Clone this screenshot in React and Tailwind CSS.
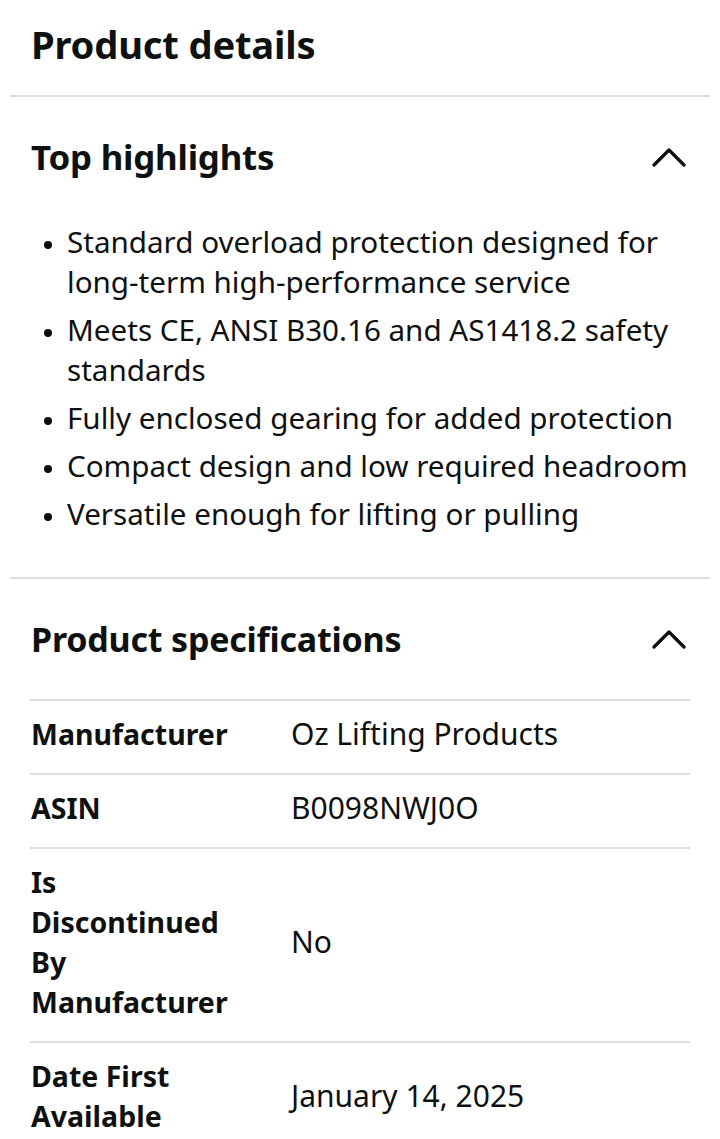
import React from "react";

const highlights = [
  "Standard overload protection designed for long-term high-performance service",
  "Meets CE, ANSI B30.16 and AS1418.2 safety standards",
  "Fully enclosed gearing for added protection",
  "Compact design and low required headroom",
  "Versatile enough for lifting or pulling",
];

const specs = [
  ["Manufacturer", "Oz Lifting Products"],
  ["ASIN", "B0098NWJ0O"],
  ["Is Discontinued By Manufacturer", "No"],
  ["Date First Available", "January 14, 2025"],
];

function Chevron() {
  return (
    <svg width="36" height="20" viewBox="0 0 36 20" fill="none" className="shrink-0">
      <polyline points="3,18 18,3 33,18" stroke="#0F1111" strokeWidth="3.2" strokeLinecap="round" strokeLinejoin="round" />
    </svg>
  );
}

export default function App() {
  return (
    <div
      className="w-[720px] bg-white text-[#0F1111] overflow-hidden"
      style={{ fontFamily: '"Noto Sans", "Open Sans", sans-serif' }}
    >
      <h1 className="px-[31px] pt-[24px] text-[38.2px] leading-[40px] font-bold tracking-[-0.2px]">Product details</h1>
      <div className="mx-[10px] mt-[31px] h-[2px] bg-[#dddddd]" />

      {/* Top highlights */}
      <section className="pt-[40px] pb-[43px]">
        <div className="flex items-center justify-between pl-[31px] pr-[33px]">
          <h2 className="text-[34.8px] leading-[40px] font-bold tracking-[-0.2px]">Top highlights</h2>
          <Chevron />
        </div>
        <ul className="mt-[45px] pl-[67px] pr-[20px] list-disc text-[29.6px] leading-[40px] flex flex-col gap-[8px]">
          {highlights.map((h) => (
            <li key={h} className="marker:text-[22px]">{h}</li>
          ))}
        </ul>
      </section>
      <div className="mx-[10px] h-[2px] bg-[#dddddd]" />

      {/* Product specifications */}
      <section className="pt-[40px]">
        <div className="flex items-center justify-between pl-[31px] pr-[33px]">
          <h2 className="text-[34px] leading-[40px] font-bold tracking-[-0.2px]">Product specifications</h2>
          <Chevron />
        </div>
        <div className="mt-[40px] mx-[30px] border-t-2 border-[#dddddd]">
          {specs.map(([k, v]) => (
            <div key={k} className="flex items-center border-b-2 border-[#dddddd] pt-[13px] pb-[19px] leading-[40px]">
              <div className="w-[261px] shrink-0 pl-[1px] pr-[54px] text-[28.5px] font-bold">{k}</div>
              <div className="flex-1 text-[30px]">{v}</div>
            </div>
          ))}
        </div>
      </section>
    </div>
  );
}
